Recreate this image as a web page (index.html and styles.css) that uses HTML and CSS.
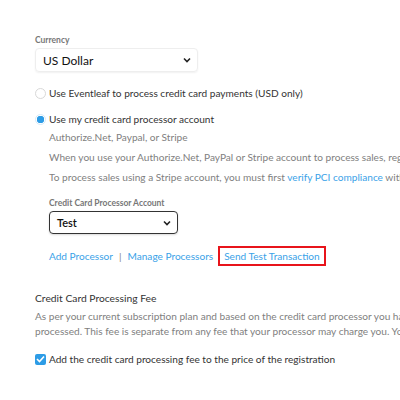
FILE: index.html
```html
<!DOCTYPE html>
<html lang="en">
<head>
  <meta charset="UTF-8">
  <title>Payment Settings</title>
  <link rel="stylesheet" href="styles.css">
</head>
<body>
  <main class="settings">

    <section class="field">
      <label class="field-label">Currency</label>
      <div class="select select-soft">
        <span>US Dollar</span>
        <svg class="chevron" width="8" height="6" viewBox="0 0 8 6"><path d="M1 1.5 L4 4.5 L7 1.5" fill="none" stroke="#222" stroke-width="1.6"/></svg>
      </div>
    </section>

    <section class="options">
      <div class="option">
        <span class="radio"></span>
        <span>Use Eventleaf to process credit card payments (USD only)</span>
      </div>

      <div class="option">
        <span class="radio checked"></span>
        <span>Use my credit card processor account</span>
      </div>

      <div class="option-body">
        <p class="muted">Authorize.Net, Paypal, or Stripe</p>
        <p class="muted">When you use your Authorize.Net, PayPal or Stripe account to process sales, registration fees are deposited directly.</p>
        <p class="muted">To process sales using a Stripe account, you must first <a href="#">verify PCI compliance</a> with Stripe.</p>

        <div class="field sub-field">
          <label class="field-label">Credit Card Processor Account</label>
          <div class="select select-dark">
            <span>Test</span>
            <svg class="chevron" width="8" height="6" viewBox="0 0 8 6"><path d="M1 1.5 L4 4.5 L7 1.5" fill="none" stroke="#222" stroke-width="1.6"/></svg>
          </div>
        </div>

        <div class="links">
          <a href="#">Add Processor</a>
          <span class="sep">|</span>
          <a href="#">Manage Processors</a>
          <a href="#" class="highlight">Send Test Transaction</a>
        </div>
      </div>
    </section>

    <section class="fee">
      <h3>Credit Card Processing Fee</h3>
      <p class="muted">As per your current subscription plan and based on the credit card processor you have selected, a fee is charged on each transaction<br>processed. This fee is separate from any fee that your processor may charge you. You can pass this fee on to your registrants.</p>
      <div class="option">
        <span class="checkbox">
          <svg width="9" height="8" viewBox="0 0 9 8"><path d="M1 4 L3.5 6.5 L8 1.5" fill="none" stroke="#fff" stroke-width="1.6"/></svg>
        </span>
        <span>Add the credit card processing fee to the price of the registration</span>
      </div>
    </section>

  </main>
</body>
</html>
```

FILE: styles.css
```css
body {
  margin: 0;
  background-color: #fff;
  color: #333;
  font-family: Lato, "Noto Sans", sans-serif;
  font-size: 10.1px;
  overflow: hidden;
}

.settings {
  padding: 35px 0 0 35px;
  width: 900px;
}

p {
  margin: 0;
}

a {
  color: #3aa2e8;
  text-decoration: none;
}

.field-label {
  display: block;
  font-size: 8.5px;
  line-height: 11px;
  font-weight: 700;
  color: #777;
  margin-bottom: 2px;
}

.select {
  display: flex;
  align-items: center;
  justify-content: space-between;
  box-sizing: border-box;
  border-radius: 4px;
  padding: 0 6px 0 7px;
}

.select-soft {
  width: 163px;
  height: 24px;
  font-size: 12px;
  color: #111;
  border: 1px solid #eee;
  box-shadow: 0 1px 2px rgba(0, 0, 0, 0.06);
}

.select-dark {
  width: 129px;
  height: 23px;
  font-size: 11px;
  font-weight: 600;
  color: #111;
  border: 1px solid #333;
  box-shadow: 0 1px 2px rgba(0, 0, 0, 0.15);
}

.chevron {
  flex: none;
}

.options {
  margin-top: 13px;
}

.option {
  display: flex;
  align-items: center;
  gap: 3px;
  height: 16px;
  margin-bottom: 10px;
  white-space: nowrap;
}

.radio {
  width: 11px;
  height: 11px;
  border: 1px solid #d8d8d8;
  border-radius: 50%;
  box-sizing: border-box;
  flex: none;
}

.radio.checked {
  border: 1px solid #d6eaf8;
  background: radial-gradient(circle, #2d9ce6 0 3.5px, #fff 4px);
}

.option-body {
  padding-left: 14px;
  margin-top: -10px;
}

.muted {
  color: #808080;
  white-space: nowrap;
  line-height: 20px;
}

.sub-field {
  margin-top: 11px;
}

.links {
  display: flex;
  align-items: center;
  gap: 6px;
  margin-top: 12px;
  white-space: nowrap;
}

.sep {
  color: #888;
}

.highlight {
  border: 2px solid #e8141b;
  padding: 2px 4px;
  margin-left: -1px;
  line-height: 12px;
}

.fee {
  margin-top: 26px;
}

.fee h3 {
  font-size: 10.3px;
  line-height: 12px;
  font-weight: 400;
  color: #333;
  margin: 0 0 5px;
}

.fee .muted {
  line-height: 15px;
  margin-bottom: 12px;
}

.checkbox {
  width: 11px;
  height: 11px;
  border-radius: 2px;
  background-color: #2d9ce6;
  display: flex;
  align-items: center;
  justify-content: center;
  flex: none;
}
```
